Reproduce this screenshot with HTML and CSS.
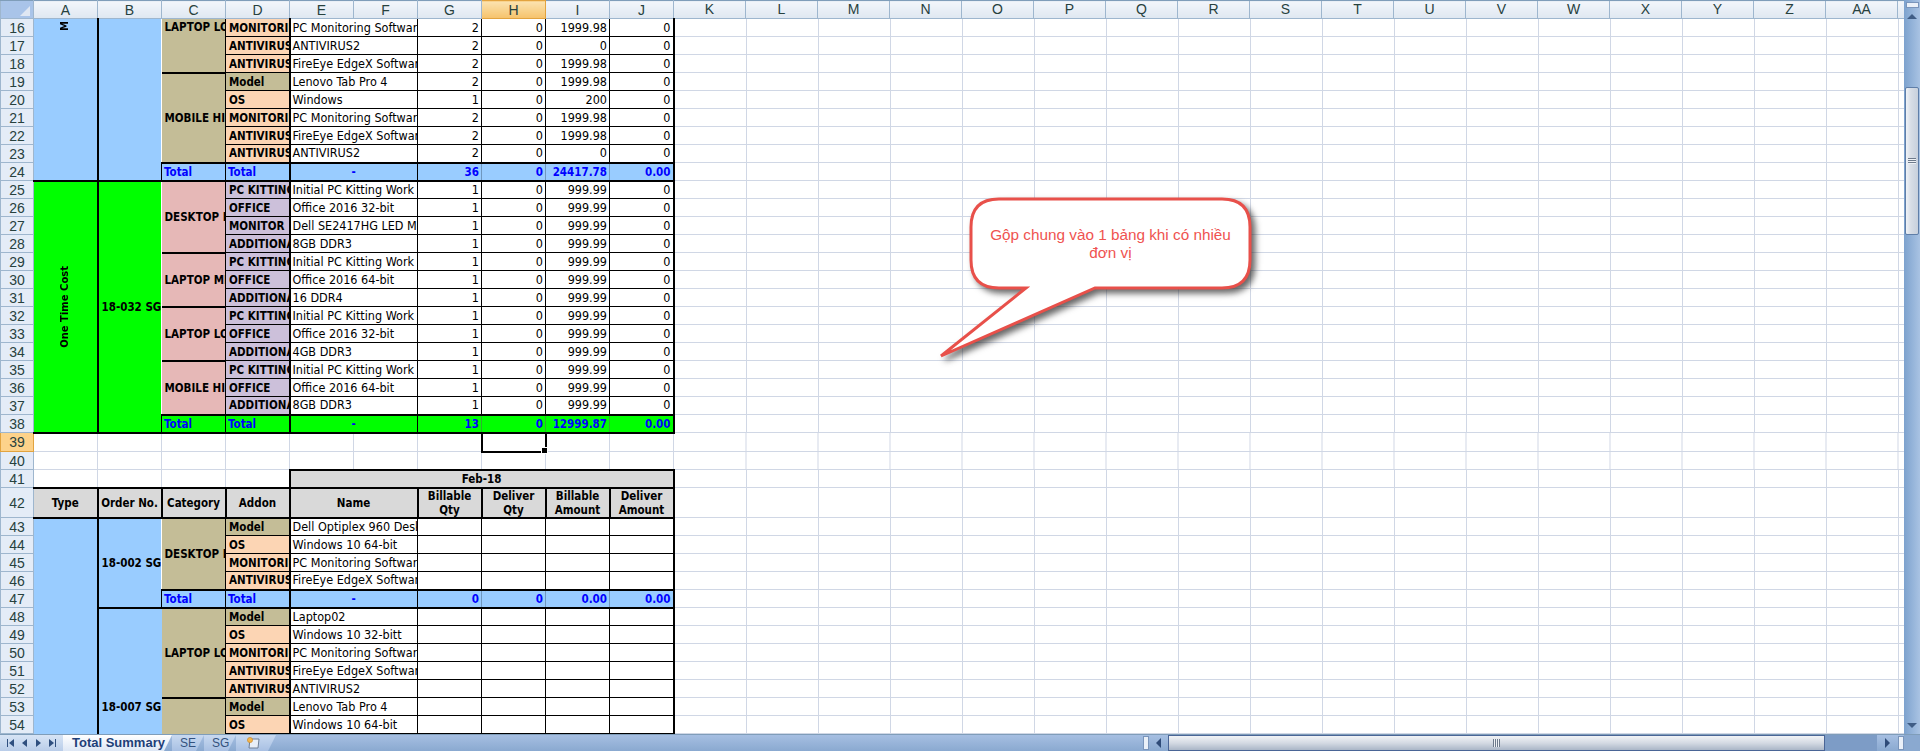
FILE: index.html
```html
<!DOCTYPE html>
<html lang="vi">
<head>
  <meta charset="UTF-8" />
  <title>Total Summary</title>
  <link rel="stylesheet" href="styles.css">
</head>
<body>
  <div class="ventana">
    <div class="centro">
      <div class="hoja">
        <table class="tabla">
          <colgroup>
            <col class="c-fila">
            <col class="c-col"><col class="c-col"><col class="c-col"><col class="c-col"><col class="c-col">
            <col class="c-col"><col class="c-col"><col class="c-col"><col class="c-col"><col class="c-col">
            <col class="c-resto">
          </colgroup>
          <tr class="cabecera">
            <th class="esquina"><span class="triangulo"></span></th>
            <th>A</th><th>B</th><th>C</th><th>D</th><th>E</th><th>F</th><th>G</th><th class="activa">H</th><th>I</th><th>J</th>
            <th class="letras"><div class="letras-fila"><span>K</span><span>L</span><span>M</span><span>N</span><span>O</span><span>P</span><span>Q</span><span>R</span><span>S</span><span>T</span><span>U</span><span>V</span><span>W</span><span>X</span><span>Y</span><span>Z</span><span>AA</span></div></th>
          </tr>

          <tr class="primera">
            <th class="fila">16</th>
            <td rowspan="9" class="azul col-a"><span class="vertical corte">M</span></td>
            <td rowspan="9" class="azul col-b"></td>
            <td rowspan="3" class="tan lab col-c arriba">LAPTOP LOW</td>
            <td class="pea lab">MONITORING</td>
            <td colspan="2" class="dato ini">PC Monitoring Software</td>
            <td class="dato num">2</td><td class="dato num">0</td><td class="dato num">1999.98</td><td class="dato num fin">0</td>
            <td class="resto"></td>
          </tr>
          <tr>
            <th class="fila">17</th>
            <td class="pea lab">ANTIVIRUS2</td>
            <td colspan="2" class="dato ini">ANTIVIRUS2</td>
            <td class="dato num">2</td><td class="dato num">0</td><td class="dato num">0</td><td class="dato num fin">0</td>
            <td class="resto"></td>
          </tr>
          <tr>
            <th class="fila">18</th>
            <td class="pea lab">ANTIVIRUS</td>
            <td colspan="2" class="dato ini">FireEye EdgeX Software</td>
            <td class="dato num">2</td><td class="dato num">0</td><td class="dato num">1999.98</td><td class="dato num fin">0</td>
            <td class="resto"></td>
          </tr>
          <tr>
            <th class="fila">19</th>
            <td rowspan="5" class="tan lab col-c">MOBILE HIGH</td>
            <td class="tan lab">Model</td>
            <td colspan="2" class="dato ini">Lenovo Tab Pro 4</td>
            <td class="dato num">2</td><td class="dato num">0</td><td class="dato num">1999.98</td><td class="dato num fin">0</td>
            <td class="resto"></td>
          </tr>
          <tr>
            <th class="fila">20</th>
            <td class="pea lab">OS</td>
            <td colspan="2" class="dato ini">Windows</td>
            <td class="dato num">1</td><td class="dato num">0</td><td class="dato num">200</td><td class="dato num fin">0</td>
            <td class="resto"></td>
          </tr>
          <tr>
            <th class="fila">21</th>
            <td class="pea lab">MONITORING</td>
            <td colspan="2" class="dato ini">PC Monitoring Software</td>
            <td class="dato num">2</td><td class="dato num">0</td><td class="dato num">1999.98</td><td class="dato num fin">0</td>
            <td class="resto"></td>
          </tr>
          <tr>
            <th class="fila">22</th>
            <td class="pea lab">ANTIVIRUS</td>
            <td colspan="2" class="dato ini">FireEye EdgeX Software</td>
            <td class="dato num">2</td><td class="dato num">0</td><td class="dato num">1999.98</td><td class="dato num fin">0</td>
            <td class="resto"></td>
          </tr>
          <tr>
            <th class="fila">23</th>
            <td class="pea lab">ANTIVIRUS2</td>
            <td colspan="2" class="dato ini">ANTIVIRUS2</td>
            <td class="dato num">2</td><td class="dato num">0</td><td class="dato num">0</td><td class="dato num fin">0</td>
            <td class="resto"></td>
          </tr>
          <tr class="total azul">
            <th class="fila">24</th>
            <td>Total</td><td>Total</td>
            <td colspan="2" class="ini centrado">-</td>
            <td class="num">36</td><td class="num">0</td><td class="num">24417.78</td><td class="num fin">0.00</td>
            <td class="resto"></td>
          </tr>

          <tr>
            <th class="fila">25</th>
            <td rowspan="14" class="verde col-a"><span class="vertical">One Time Cost</span></td>
            <td rowspan="14" class="verde col-b lab centrado">18-032 SG</td>
            <td rowspan="4" class="ros lab col-c">DESKTOP PC</td>
            <td class="lil lab">PC KITTING</td>
            <td colspan="2" class="dato ini">Initial PC Kitting Work</td>
            <td class="dato num">1</td><td class="dato num">0</td><td class="dato num">999.99</td><td class="dato num fin">0</td>
            <td class="resto"></td>
          </tr>
          <tr>
            <th class="fila">26</th>
            <td class="lil lab">OFFICE</td>
            <td colspan="2" class="dato ini">Office 2016 32-bit</td>
            <td class="dato num">1</td><td class="dato num">0</td><td class="dato num">999.99</td><td class="dato num fin">0</td>
            <td class="resto"></td>
          </tr>
          <tr>
            <th class="fila">27</th>
            <td class="lil lab">MONITOR</td>
            <td colspan="2" class="dato ini">Dell SE2417HG LED Monitor</td>
            <td class="dato num">1</td><td class="dato num">0</td><td class="dato num">999.99</td><td class="dato num fin">0</td>
            <td class="resto"></td>
          </tr>
          <tr>
            <th class="fila">28</th>
            <td class="lil lab">ADDITIONAL</td>
            <td colspan="2" class="dato ini">8GB DDR3</td>
            <td class="dato num">1</td><td class="dato num">0</td><td class="dato num">999.99</td><td class="dato num fin">0</td>
            <td class="resto"></td>
          </tr>
          <tr>
            <th class="fila">29</th>
            <td rowspan="3" class="ros lab col-c">LAPTOP MID</td>
            <td class="lil lab">PC KITTING</td>
            <td colspan="2" class="dato ini">Initial PC Kitting Work</td>
            <td class="dato num">1</td><td class="dato num">0</td><td class="dato num">999.99</td><td class="dato num fin">0</td>
            <td class="resto"></td>
          </tr>
          <tr>
            <th class="fila">30</th>
            <td class="lil lab">OFFICE</td>
            <td colspan="2" class="dato ini">Office 2016 64-bit</td>
            <td class="dato num">1</td><td class="dato num">0</td><td class="dato num">999.99</td><td class="dato num fin">0</td>
            <td class="resto"></td>
          </tr>
          <tr>
            <th class="fila">31</th>
            <td class="lil lab">ADDITIONAL</td>
            <td colspan="2" class="dato ini">16 DDR4</td>
            <td class="dato num">1</td><td class="dato num">0</td><td class="dato num">999.99</td><td class="dato num fin">0</td>
            <td class="resto"></td>
          </tr>
          <tr>
            <th class="fila">32</th>
            <td rowspan="3" class="ros lab col-c">LAPTOP LOW</td>
            <td class="lil lab">PC KITTING</td>
            <td colspan="2" class="dato ini">Initial PC Kitting Work</td>
            <td class="dato num">1</td><td class="dato num">0</td><td class="dato num">999.99</td><td class="dato num fin">0</td>
            <td class="resto"></td>
          </tr>
          <tr>
            <th class="fila">33</th>
            <td class="lil lab">OFFICE</td>
            <td colspan="2" class="dato ini">Office 2016 32-bit</td>
            <td class="dato num">1</td><td class="dato num">0</td><td class="dato num">999.99</td><td class="dato num fin">0</td>
            <td class="resto"></td>
          </tr>
          <tr>
            <th class="fila">34</th>
            <td class="lil lab">ADDITIONAL</td>
            <td colspan="2" class="dato ini">4GB DDR3</td>
            <td class="dato num">1</td><td class="dato num">0</td><td class="dato num">999.99</td><td class="dato num fin">0</td>
            <td class="resto"></td>
          </tr>
          <tr>
            <th class="fila">35</th>
            <td rowspan="3" class="ros lab col-c">MOBILE HIGH</td>
            <td class="lil lab">PC KITTING</td>
            <td colspan="2" class="dato ini">Initial PC Kitting Work</td>
            <td class="dato num">1</td><td class="dato num">0</td><td class="dato num">999.99</td><td class="dato num fin">0</td>
            <td class="resto"></td>
          </tr>
          <tr>
            <th class="fila">36</th>
            <td class="lil lab">OFFICE</td>
            <td colspan="2" class="dato ini">Office 2016 64-bit</td>
            <td class="dato num">1</td><td class="dato num">0</td><td class="dato num">999.99</td><td class="dato num fin">0</td>
            <td class="resto"></td>
          </tr>
          <tr>
            <th class="fila">37</th>
            <td class="lil lab">ADDITIONAL</td>
            <td colspan="2" class="dato ini">8GB DDR3</td>
            <td class="dato num">1</td><td class="dato num">0</td><td class="dato num">999.99</td><td class="dato num fin">0</td>
            <td class="resto"></td>
          </tr>
          <tr class="total verde">
            <th class="fila">38</th>
            <td>Total</td><td>Total</td>
            <td colspan="2" class="ini centrado">-</td>
            <td class="num">13</td><td class="num">0</td><td class="num">12999.87</td><td class="num fin">0.00</td>
            <td class="resto"></td>
          </tr>

          <tr class="alta">
            <th class="fila activa">39</th>
            <td></td><td></td><td></td><td></td><td></td><td></td><td></td>
            <td class="seleccion"><span class="tirador"></span></td>
            <td></td><td></td>
            <td class="resto"></td>
          </tr>
          <tr>
            <th class="fila">40</th>
            <td></td><td></td><td></td><td></td><td></td><td></td><td></td><td></td><td></td><td></td>
            <td class="resto"></td>
          </tr>
          <tr>
            <th class="fila">41</th>
            <td></td><td></td><td></td><td></td>
            <td colspan="6" class="gris titulo">Feb-18</td>
            <td class="resto"></td>
          </tr>
          <tr class="doble">
            <th class="fila">42</th>
            <td class="gris titulo sin-izq">Type</td>
            <td class="gris titulo">Order No.</td>
            <td class="gris titulo">Category</td>
            <td class="gris titulo">Addon</td>
            <td colspan="2" class="gris titulo">Name</td>
            <td class="gris titulo">Billable Qty</td>
            <td class="gris titulo">Deliver Qty</td>
            <td class="gris titulo">Billable Amount</td>
            <td class="gris titulo">Deliver Amount</td>
            <td class="resto"></td>
          </tr>

          <tr>
            <th class="fila">43</th>
            <td rowspan="13" class="azul col-a"></td>
            <td rowspan="5" class="azul col-b lab centrado">18-002 SG</td>
            <td rowspan="4" class="tan lab col-c">DESKTOP PC</td>
            <td class="tan lab">Model</td>
            <td colspan="2" class="dato ini">Dell Optiplex 960 Desktop</td>
            <td class="dato"></td><td class="dato"></td><td class="dato"></td><td class="dato fin"></td>
            <td class="resto"></td>
          </tr>
          <tr>
            <th class="fila">44</th>
            <td class="pea lab">OS</td>
            <td colspan="2" class="dato ini">Windows 10 64-bit</td>
            <td class="dato"></td><td class="dato"></td><td class="dato"></td><td class="dato fin"></td>
            <td class="resto"></td>
          </tr>
          <tr>
            <th class="fila">45</th>
            <td class="pea lab">MONITORING</td>
            <td colspan="2" class="dato ini">PC Monitoring Software</td>
            <td class="dato"></td><td class="dato"></td><td class="dato"></td><td class="dato fin"></td>
            <td class="resto"></td>
          </tr>
          <tr>
            <th class="fila">46</th>
            <td class="pea lab">ANTIVIRUS</td>
            <td colspan="2" class="dato ini">FireEye EdgeX Software</td>
            <td class="dato"></td><td class="dato"></td><td class="dato"></td><td class="dato fin"></td>
            <td class="resto"></td>
          </tr>
          <tr class="total azul">
            <th class="fila">47</th>
            <td>Total</td><td>Total</td>
            <td colspan="2" class="ini centrado">-</td>
            <td class="num">0</td><td class="num">0</td><td class="num">0.00</td><td class="num fin">0.00</td>
            <td class="resto"></td>
          </tr>
          <tr>
            <th class="fila">48</th>
            <td rowspan="8" class="azul col-b lab centrado bajo">18-007 SG</td>
            <td rowspan="5" class="tan lab col-c">LAPTOP LOW</td>
            <td class="tan lab">Model</td>
            <td colspan="2" class="dato ini">Laptop02</td>
            <td class="dato"></td><td class="dato"></td><td class="dato"></td><td class="dato fin"></td>
            <td class="resto"></td>
          </tr>
          <tr>
            <th class="fila">49</th>
            <td class="pea lab">OS</td>
            <td colspan="2" class="dato ini">Windows 10 32-bitt</td>
            <td class="dato"></td><td class="dato"></td><td class="dato"></td><td class="dato fin"></td>
            <td class="resto"></td>
          </tr>
          <tr>
            <th class="fila">50</th>
            <td class="pea lab">MONITORING</td>
            <td colspan="2" class="dato ini">PC Monitoring Software</td>
            <td class="dato"></td><td class="dato"></td><td class="dato"></td><td class="dato fin"></td>
            <td class="resto"></td>
          </tr>
          <tr>
            <th class="fila">51</th>
            <td class="pea lab">ANTIVIRUS</td>
            <td colspan="2" class="dato ini">FireEye EdgeX Software</td>
            <td class="dato"></td><td class="dato"></td><td class="dato"></td><td class="dato fin"></td>
            <td class="resto"></td>
          </tr>
          <tr>
            <th class="fila">52</th>
            <td class="pea lab">ANTIVIRUS2</td>
            <td colspan="2" class="dato ini">ANTIVIRUS2</td>
            <td class="dato"></td><td class="dato"></td><td class="dato"></td><td class="dato fin"></td>
            <td class="resto"></td>
          </tr>
          <tr>
            <th class="fila">53</th>
            <td rowspan="3" class="tan lab col-c"></td>
            <td class="tan lab">Model</td>
            <td colspan="2" class="dato ini">Lenovo Tab Pro 4</td>
            <td class="dato"></td><td class="dato"></td><td class="dato"></td><td class="dato fin"></td>
            <td class="resto"></td>
          </tr>
          <tr>
            <th class="fila">54</th>
            <td class="pea lab">OS</td>
            <td colspan="2" class="dato ini">Windows 10 64-bit</td>
            <td class="dato"></td><td class="dato"></td><td class="dato"></td><td class="dato fin"></td>
            <td class="resto"></td>
          </tr>
          <tr>
            <th class="fila">55</th>
            <td class="pea lab">MONITORING</td>
            <td colspan="2" class="dato ini">PC Monitoring Software</td>
            <td class="dato"></td><td class="dato"></td><td class="dato"></td><td class="dato fin"></td>
            <td class="resto"></td>
          </tr>
        </table>

        <div class="globo">
          <svg class="globo-forma" width="330" height="175" viewBox="0 0 330 175">
            <path d="M58 8 H281 Q309 8 309 36 V69 Q309 97 281 97 H154 L0 165 L85 97 H58 Q30 97 30 69 V36 Q30 8 58 8 Z" />
          </svg>
          <p class="globo-texto">Gộp chung vào 1 bảng khi có nhiều<br>đơn vị</p>
        </div>
      </div>

      <div class="vscroll">
        <span class="divisor-h"></span>
        <span class="flecha arriba-f"></span>
        <div class="vpista"><div class="vbarra"><span class="grip-v"></span></div></div>
        <span class="flecha abajo-f"></span>
      </div>
    </div>

    <div class="pie">
      <div class="nav">
        <span class="nav-btn pri"></span><span class="nav-btn ant"></span><span class="nav-btn sig"></span><span class="nav-btn ult"></span>
      </div>
      <div class="pestana activa-p">Total Summary</div>
      <div class="pestana">SE</div>
      <div class="pestana">SG</div>
      <div class="pestana nueva">
        <svg width="16" height="14" viewBox="0 0 16 14">
          <path d="M5 3 H14 L13 12 H4 Z" fill="#e8eef7" stroke="#6f7f95" />
          <circle cx="5" cy="4" r="2.6" fill="#f2b64c" stroke="#c9852a" stroke-width="0.6" />
        </svg>
      </div>
      <div class="hscroll">
        <span class="divisor-v"></span>
        <span class="hflecha izq"></span>
        <div class="hpista"><div class="hbarra"><span class="grip-h"></span></div></div>
        <span class="hflecha der"></span>
        <span class="divisor-v"></span>
      </div>
      <span class="rincon"></span>
    </div>
  </div>
</body>
</html>
```

FILE: styles.css
```css
html, body {
  margin: 0;
  height: 100%;
  overflow: hidden;
  background: #fff;
}

.ventana {
  display: flex;
  flex-direction: column;
  height: 100vh;
}

.centro {
  flex: 1;
  min-height: 0;
  display: flex;
}

.hoja {
  flex: 1;
  min-width: 0;
  position: relative;
  overflow: hidden;
}

/* tabla */
.tabla {
  border-collapse: collapse;
  table-layout: fixed;
  width: 1904px;
  font-family: 'DejaVu Sans Condensed', 'DejaVu Sans', sans-serif;
  font-size: 12.5px;
  color: #000;
}

.c-fila { width: 33px; }
.c-col { width: 64px; }
.c-resto { width: 1231px; }

.tabla tr { height: 18px; }
.tabla tr.alta { height: 19px; }
.tabla tr.doble { height: 30px; }

.tabla td, .tabla th {
  box-sizing: border-box;
  padding: 0 2px;
  border: 1px solid #d0d7e5;
  overflow: hidden;
  white-space: nowrap;
  line-height: 14px;
}

/* cabeceras de Excel */
.cabecera th {
  height: 18px;
  padding: 0;
  font-family: 'Liberation Sans', Arial, sans-serif;
  font-weight: normal;
  font-size: 14px;
  color: #27413e;
  text-align: center;
  background: linear-gradient(#f2f6fb, #dfe7f1);
  border: 1px solid #9eb6ce;
  border-top: 1px solid #7f9db9;
}

.cabecera .activa {
  background: linear-gradient(#fbe3b0, #f6c26b);
  border-color: #e2a33f;
}

.cabecera .esquina {
  position: relative;
  background: #a9c4e9;
}

.triangulo {
  position: absolute;
  right: 3px;
  bottom: 2px;
  border-style: solid;
  border-width: 0 0 10px 10px;
  border-color: transparent transparent #dfe7f3 transparent;
}

.cabecera .letras {
  border-right: 0;
}

.letras-fila {
  display: flex;
  height: 17px;
  line-height: 17px;
}

.letras-fila span {
  width: 72px;
  box-sizing: border-box;
  flex: none;
  border-right: 1px solid #9eb6ce;
}

.tabla .fila {
  padding: 0;
  font-family: 'Liberation Sans', Arial, sans-serif;
  font-weight: normal;
  font-size: 14px;
  color: #27413e;
  text-align: center;
  background: #e4ecf7;
  border: 1px solid #9eb6ce;
}

.tabla .fila.activa {
  background: #fdd28a;
  border-color: #e2a33f;
}

/* celda en blanco a la derecha con sus lineas */
.tabla td.resto {
  padding: 0;
  border-left: 0;
  border-right: 0;
  background: repeating-linear-gradient(to right, #fff 0, #fff 71px, #d0d7e5 71px, #d0d7e5 72px);
}

/* colores */
.azul { background: #99ccff; }
.verde { background: #00ff00; }
.tan { background: #c4bd97; }
.pea { background: #fcd5b4; }
.ros { background: #e6b8b7; }
.lil { background: #ccc0da; }
.gris { background: #d9d9d9; }

.tabla td.lab {
  font-size: 11.5px;
  font-weight: bold;
  border: 1px solid #000;
  padding: 0 1px 0 3px;
}

/* columnas combinadas */
.tabla td.col-a {
  border: 2px solid #000;
  border-left: 0;
}

.tabla td.col-b {
  border: 2px solid #000;
  border-left: 2px solid #000;
  border-right: 0;
}

.tabla td.col-c {
  border: 2px solid #000;
  border-left: 0;
  border-right: 1px solid #000;
}

.tabla tr.primera td {
  border-top: 0;
}

.tabla td.arriba {
  vertical-align: top;
  padding-top: 1px;
}

.tabla td.bajo {
  vertical-align: top;
  padding-top: 91px;
}

.tabla td.centrado { text-align: center; }

.tabla td.dato {
  border: 1px solid #000;
  background: #fff;
}

.tabla td.ini { border-left: 2px solid #000; }
.tabla td.fin { border-right: 2px solid #000; }
.tabla td.num { text-align: right; }

.tabla tr.total td {
  border: 1px solid #000;
  border-top: 2px solid #000;
  border-bottom: 2px solid #000;
  font-size: 11.5px;
  font-weight: bold;
  color: #0000ff;
}

.tabla tr.total td.ini { border-left: 2px solid #000; }

.tabla tr.azul td.num { border-left-color: #6f97bf; border-right-color: #6f97bf; }
.tabla tr.verde td.num { border-left-color: #2fae2f; border-right-color: #2fae2f; }

.tabla tr.total td.fin { border-right: 2px solid #000; }

.tabla tr.total td.resto {
  background: repeating-linear-gradient(to right, #fff 0, #fff 71px, #d0d7e5 71px, #d0d7e5 72px);
  border-top: 1px solid #d0d7e5;
  border-bottom: 1px solid #d0d7e5;
  border-left: 0;
  border-right: 0;
}

.tabla td.titulo {
  border: 2px solid #000;
  font-size: 11.5px;
  font-weight: bold;
  text-align: center;
  line-height: 14px;
}

.tabla tr.doble td.titulo { white-space: normal; padding: 0 1px; }
.tabla tr.doble td.sin-izq { border-left: 0; }

.vertical {
  display: block;
  margin: 0 auto;
  writing-mode: vertical-rl;
  transform: rotate(180deg);
  font-family: 'DejaVu Sans', sans-serif;
  font-weight: bold;
  font-size: 10px;
  line-height: 12px;
  height: max-content;
  width: 12px;
}

.corte { margin-top: 2px; }

.tabla td:has(.corte) { vertical-align: top; }

/* celda seleccionada */
.tabla td.seleccion {
  position: relative;
  border: 2px solid #000;
  overflow: visible;
}

.tirador {
  position: absolute;
  right: -3px;
  bottom: -3px;
  width: 5px;
  height: 5px;
  background: #000;
  border: 1px solid #fff;
}

/* globo */
.globo {
  position: absolute;
  left: 941px;
  top: 191px;
  width: 330px;
  height: 175px;
}

.globo-forma {
  position: absolute;
  left: 0;
  top: 0;
  overflow: visible;
  filter: drop-shadow(4px 4px 3px rgba(40, 40, 40, 0.7));
}

.globo-forma path {
  fill: #fff;
  stroke: #e8504a;
  stroke-width: 3;
  stroke-linejoin: miter;
}

.globo-texto {
  position: absolute;
  left: 30px;
  top: 35px;
  width: 279px;
  margin: 0;
  font-family: 'Liberation Sans', Arial, sans-serif;
  font-size: 15.3px;
  line-height: 18px;
  text-align: center;
  color: #ef5350;
}

/* barra vertical */
.vscroll {
  width: 16px;
  flex: none;
  display: flex;
  flex-direction: column;
  align-items: center;
  background: linear-gradient(to right, #7da2ce, #a9c3e3);
}

.divisor-h {
  width: 13px;
  height: 6px;
  margin-top: 2px;
  box-sizing: border-box;
  background: #eaf0f8;
  border: 1px solid #7a95bb;
}

.flecha {
  width: 0;
  height: 0;
  border-left: 5px solid transparent;
  border-right: 5px solid transparent;
  margin: 6px 0;
}

.arriba-f { border-bottom: 5px solid #3f5d85; }
.abajo-f { border-top: 5px solid #3f5d85; }

.vpista {
  flex: 1;
  width: 100%;
  padding-top: 62px;
  box-sizing: border-box;
}

.vbarra {
  width: 14px;
  height: 148px;
  margin: 0 auto;
  box-sizing: border-box;
  background: linear-gradient(to right, #f0f3f7, #d7dde6 40%, #c7d0dc);
  border: 1px solid #5f7ea8;
  border-radius: 2px;
  display: flex;
  align-items: center;
  justify-content: center;
}

.grip-v {
  width: 8px;
  height: 6px;
  background: repeating-linear-gradient(#6d7a8c 0, #6d7a8c 1px, #eef1f5 1px, #eef1f5 2px);
}

/* pie con pestanas */
.pie {
  height: 17px;
  flex: none;
  display: flex;
  align-items: stretch;
  background: linear-gradient(#a6bfe2, #8aa9d0);
  border-top: 1px solid #7f9db9;
  box-sizing: border-box;
  font-family: 'Liberation Sans', Arial, sans-serif;
}

.nav {
  width: 63px;
  flex: none;
  display: flex;
  align-items: center;
  justify-content: space-around;
  padding: 0 5px;
  box-sizing: border-box;
  background: linear-gradient(#d7e4f5, #b9cde9);
}

.nav-btn {
  position: relative;
  width: 0;
  height: 0;
  border-top: 4px solid transparent;
  border-bottom: 4px solid transparent;
}

.pri, .ant { border-right: 5px solid #2f4f7f; }
.sig, .ult { border-left: 5px solid #2f4f7f; }

.pri::before, .ult::after {
  content: '';
  position: absolute;
  top: -4px;
  width: 1px;
  height: 8px;
  background: #2f4f7f;
}

.pri::before { left: -2px; }
.ult::after { left: 1px; }

.pestana {
  width: 32px;
  box-sizing: border-box;
  padding-left: 8px;
  font-size: 12px;
  line-height: 16px;
  color: #33527e;
  background: linear-gradient(#c8d9f0, #a8c0e3);
  clip-path: polygon(0 100%, 0 0, 100% 0, calc(100% - 8px) 100%);
}

.activa-p {
  width: 109px;
  padding-left: 9px;
  font-weight: bold;
  font-size: 13px;
  color: #1f3f78;
  background: linear-gradient(#fff, #dde7f5);
}

.nueva {
  width: 40px;
  padding: 1px 0 0 9px;
  display: flex;
  align-items: flex-start;
}

.hscroll {
  margin-left: auto;
  width: 761px;
  flex: none;
  display: flex;
  align-items: center;
}

.divisor-v {
  width: 6px;
  height: 14px;
  flex: none;
  box-sizing: border-box;
  background: #eaf0f8;
  border: 1px solid #7a95bb;
}

.hflecha {
  width: 0;
  height: 0;
  flex: none;
  border-top: 5px solid transparent;
  border-bottom: 5px solid transparent;
}

.izq { border-right: 5px solid #2f4b78; margin: 0 7px; }
.der { border-left: 5px solid #2f4b78; margin: 0 8px; }

.hpista {
  flex: 1;
  height: 100%;
  background: #7d9cc6;
  padding-right: 52px;
}

.hbarra {
  width: 100%;
  height: 100%;
  box-sizing: border-box;
  background: linear-gradient(#f1f3f6, #d4dae3 50%, #aab6c7);
  border: 1px solid #4a6596;
  display: flex;
  align-items: center;
  justify-content: center;
}

.grip-h {
  width: 7px;
  height: 8px;
  background: repeating-linear-gradient(to right, #6d7a8c 0, #6d7a8c 1px, #eef1f5 1px, #eef1f5 2px);
}

.rincon {
  width: 16px;
  flex: none;
  background: #8aa9d0;
}
```
